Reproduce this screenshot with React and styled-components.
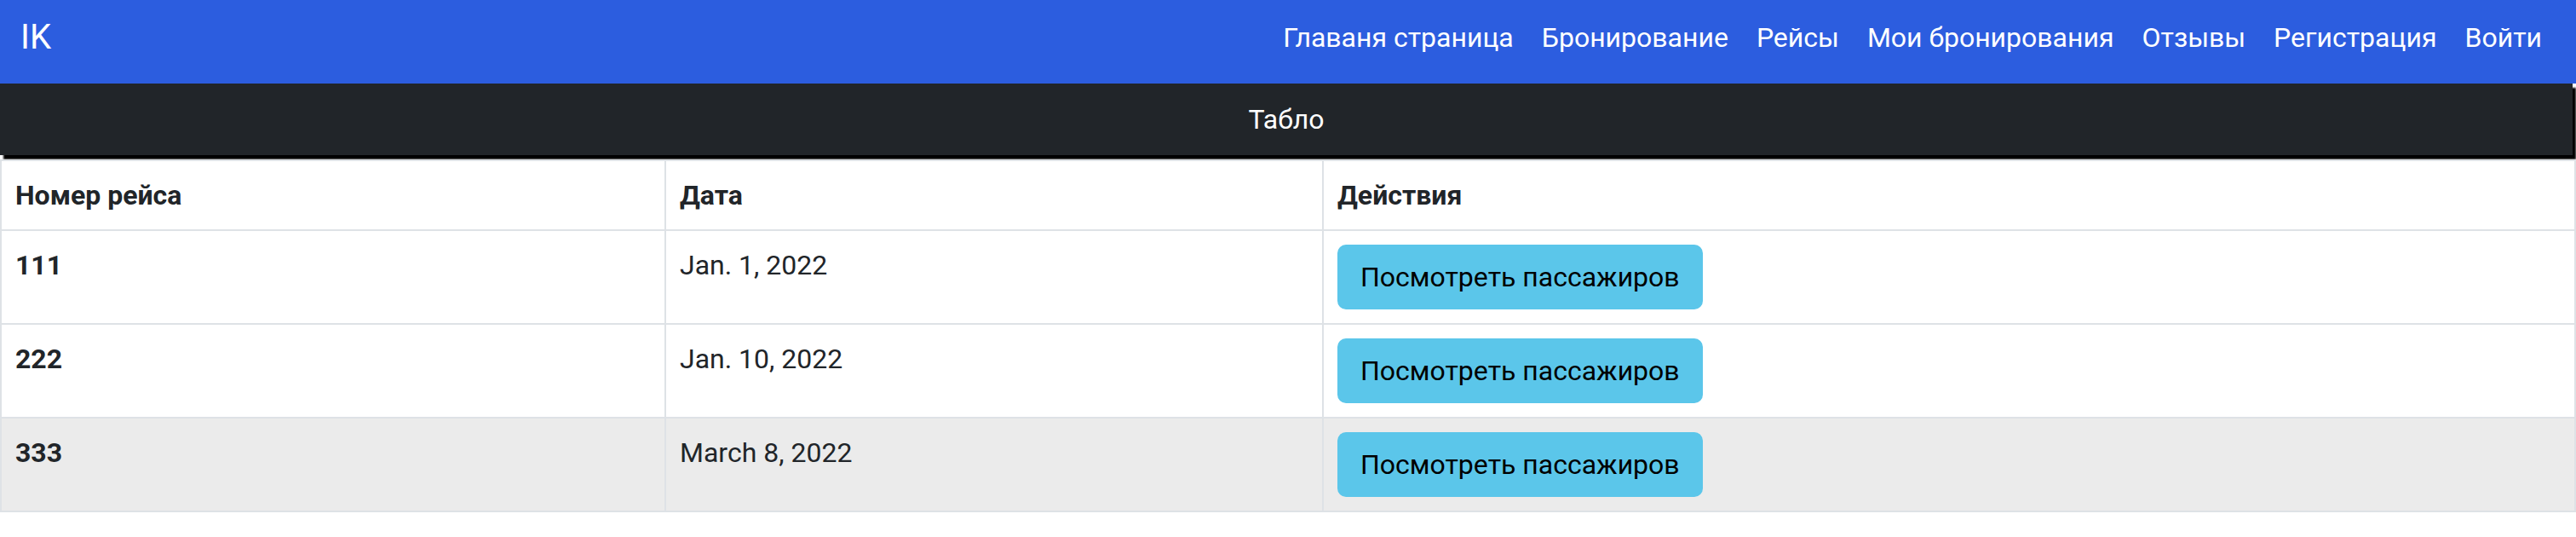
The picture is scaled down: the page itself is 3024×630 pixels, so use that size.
import React from 'react';
import styled, { createGlobalStyle } from 'styled-components';

const GlobalStyle = createGlobalStyle`
    body {
        margin: 0;
        font-family: Roboto, "Liberation Sans", sans-serif;
        font-size: 32px;
        line-height: 1.5;
        color: #212529;
        background: #fff;
    }
`;

const Navbar = styled.nav`
    height: 98px;
    box-sizing: border-box;
    background: #2c5ddf;
    display: flex;
    align-items: center;
    justify-content: space-between;
    padding: 0 24px 11px;
`;

const Brand = styled.a`
    font-size: 40px;
    line-height: 60px;
    color: #fff;
    text-decoration: none;
`;

const NavList = styled.ul`
    display: flex;
    list-style: none;
    margin: 0;
    padding: 0;
`;

const NavLink = styled.a`
    display: block;
    padding: 0 16px 0 17px;
    color: #fff;
    text-decoration: none;
`;

const Board = styled.div`
    width: calc(100% - 4px);
    height: 84px;
    background: #212529;
    color: #fff;
    display: flex;
    align-items: center;
    justify-content: center;
    box-shadow: 4px 5px 2px #000;
`;

const Table = styled.table`
    width: 100%;
    margin-top: 5px;
    border-collapse: collapse;
    table-layout: fixed;
    border: 2px solid #dee2e6;
`;

const Head = styled.th`
    width: ${p => p.w ? `${p.w}px` : 'auto'};
    text-align: left;
    font-weight: 700;
    padding: 16px;
    border: 2px solid #dee2e6;
    vertical-align: top;
`;

const Row = styled.tr`
    background: ${p => p.shaded ? '#ebebeb' : '#fff'};
`;

const Cell = styled.td`
    padding: 16px;
    border: 2px solid #dee2e6;
    vertical-align: top;
    font-weight: ${p => p.bold ? 700 : 400};
`;

const InfoButton = styled.button`
    font-family: inherit;
    font-size: 32px;
    line-height: 1.5;
    color: #000;
    background: #5bc6ea;
    border: none;
    border-radius: 10px;
    padding: 14px 27px;
    display: block;
`;

const links = ['Главаня страница', 'Бронирование', 'Рейсы', 'Мои бронирования', 'Отзывы', 'Регистрация', 'Войти'];

const flights = [
    { num: '111', date: 'Jan. 1, 2022' },
    { num: '222', date: 'Jan. 10, 2022' },
    { num: '333', date: 'March 8, 2022' },
];

export default function App() {
    return (
        <>
            <GlobalStyle />
            <Navbar>
                <Brand href="#">IK</Brand>
                <NavList>
                    {links.map(l => (
                        <li key={l}><NavLink href="#">{l}</NavLink></li>
                    ))}
                </NavList>
            </Navbar>
            <Board>Табло</Board>
            <Table>
                <thead>
                    <tr>
                        <Head w={746}>Номер рейса</Head>
                        <Head w={738}>Дата</Head>
                        <Head>Действия</Head>
                    </tr>
                </thead>
                <tbody>
                    {flights.map((f, i) => (
                        <Row key={f.num} shaded={i === 2}>
                            <Cell bold>{f.num}</Cell>
                            <Cell>{f.date}</Cell>
                            <Cell>
                                <InfoButton>Посмотреть пассажиров</InfoButton>
                            </Cell>
                        </Row>
                    ))}
                </tbody>
            </Table>
        </>
    );
}
